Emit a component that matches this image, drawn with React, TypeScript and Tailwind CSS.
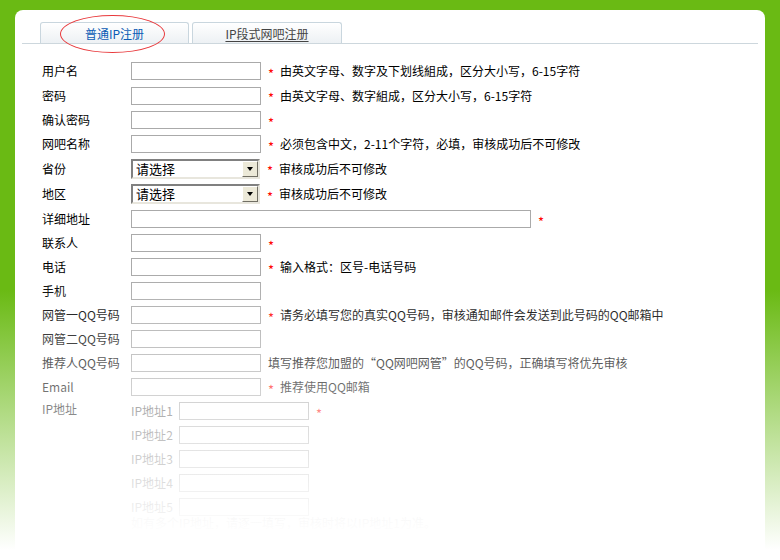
import React from 'react';

type Row = {
  label: string;
  kind: 'input' | 'select' | 'wide' | 'ip';
  star?: boolean;
  hint?: string;
  h: string;
};

const rows: Row[] = [
  { label: '用户名', kind: 'input', star: true, hint: '由英文字母、数字及下划线組成，区分大小写，6-15字符', h: 'h-6' },
  { label: '密码', kind: 'input', star: true, hint: '由英文字母、数字組成，区分大小写，6-15字符', h: 'h-[25px]' },
  { label: '确认密码', kind: 'input', star: true, h: 'h-6' },
  { label: '网吧名称', kind: 'input', star: true, hint: '必须包含中文，2-11个字符，必填，审核成功后不可修改', h: 'h-6' },
  { label: '省份', kind: 'select', star: true, hint: '审核成功后不可修改', h: 'h-[25px]' },
  { label: '地区', kind: 'select', star: true, hint: '审核成功后不可修改', h: 'h-[26px]' },
  { label: '详细地址', kind: 'wide', star: true, h: 'h-6' },
  { label: '联系人', kind: 'input', star: true, h: 'h-6' },
  { label: '电话', kind: 'input', star: true, hint: '输入格式：区号-电话号码', h: 'h-6' },
  { label: '手机', kind: 'input', h: 'h-6' },
  { label: '网管一QQ号码', kind: 'input', star: true, hint: '请务必填写您的真实QQ号码，审核通知邮件会发送到此号码的QQ邮箱中', h: 'h-6' },
  { label: '网管二QQ号码', kind: 'input', h: 'h-6' },
  { label: '推荐人QQ号码', kind: 'input', hint: '填写推荐您加盟的“QQ网吧网管”的QQ号码，正确填写将优先审核', h: 'h-6' },
  { label: 'Email', kind: 'input', star: true, hint: '推荐使用QQ邮箱', h: 'h-6' },
];

function Star() {
  return <span className="ml-[7px] w-[6px] text-[13px] leading-none text-[#ff0000] relative top-[2px]">*</span>;
}

function Select() {
  return (
    <div className="flex h-[20px] w-[129px] border-2 border-t-[#808080] border-l-[#808080] border-r-[#e8e6dd] border-b-[#e8e6dd] bg-white">
      <span className="flex-1 pl-[3px] text-[13px] leading-[16px] text-black">请选择</span>
      <span className="flex w-[16px] items-center justify-center border border-t-white border-l-white border-r-[#716f64] border-b-[#716f64] bg-[#ece9d8]">
        <span className="h-0 w-0 border-x-[3.5px] border-t-[4px] border-x-transparent border-t-black" />
      </span>
    </div>
  );
}

export default function App() {
  return (
    <div className="flex h-[560px] w-[780px] flex-col overflow-hidden bg-[linear-gradient(180deg,#6aba14_0,#6aba14_290px,#ffffff_550px)] px-[15px] pt-[10px] font-['Noto_Sans_CJK_SC','Noto_Sans',sans-serif] text-[12px] text-black">
      <div className="relative flex-1 rounded-t-[8px] bg-white pt-[12px]">
        {/* tabs */}
        <div className="mx-[7px] flex gap-[3px] border-b border-[#cdd7dd] pl-[18px]">
          <div className="flex h-[21px] w-[149px] items-center justify-center rounded-t-[3px] border border-b-0 border-[#c9d6de] bg-linear-to-b from-white to-[#edf1f4] pt-[2px] leading-none text-[#0b5cb5]">
            普通IP注册
          </div>
          <div className="flex h-[21px] w-[150px] items-center justify-center rounded-t-[3px] border border-b-0 border-[#c9d6de] bg-linear-to-b from-white to-[#edf1f4] pt-[2px] leading-none text-[#444] underline underline-offset-2">
            IP段式网吧注册
          </div>
        </div>
        <div className="absolute left-[45px] top-[5px] h-[38px] w-[105px] rounded-[50%] border border-[#e8383b]" />

        {/* form */}
        <div className="flex flex-col pl-[27px] pt-[15px]">
          {rows.map((r) => (
            <div key={r.label} className={`flex items-center ${r.h}`}>
              <span className="w-[89px] leading-none">{r.label}</span>
              {r.kind === 'select' ? (
                <Select />
              ) : (
                <span className={`h-[18px] border border-[#aaaaaa] bg-white ${r.kind === 'wide' ? 'w-[400px]' : 'w-[130px]'}`} />
              )}
              {r.star ? <Star /> : <span className="w-[7px]" />}
              {r.hint && <span className={`${r.star ? 'ml-[6px]' : 'ml-0'} leading-none`}>{r.hint}</span>}
            </div>
          ))}
          <div className="flex">
            <span className="w-[89px] pt-[4px] leading-none">IP地址</span>
            <div className="flex flex-col">
              {[1, 2, 3, 4, 5].map((n) => (
                <div key={n} className="flex h-6 items-center">
                  <span className="w-[48px] leading-none text-[#555]">IP地址{n}</span>
                  <span className="h-[18px] w-[130px] border border-[#aaaaaa] bg-white" />
                  {n === 1 && <Star />}
                </div>
              ))}
              <span className="-mt-[2px] leading-none text-[#999]">如有多个IP地址，请逐一填写，审核时将以IP地址1为准。</span>
            </div>
          </div>
        </div>

        {/* fade out */}
        <div className="pointer-events-none absolute left-0 right-0 top-[262px] h-[262px] bg-linear-to-b from-white/0 to-white" />
        <div className="pointer-events-none absolute bottom-0 left-0 right-0 top-[524px] bg-white" />
      </div>
    </div>
  );
}
